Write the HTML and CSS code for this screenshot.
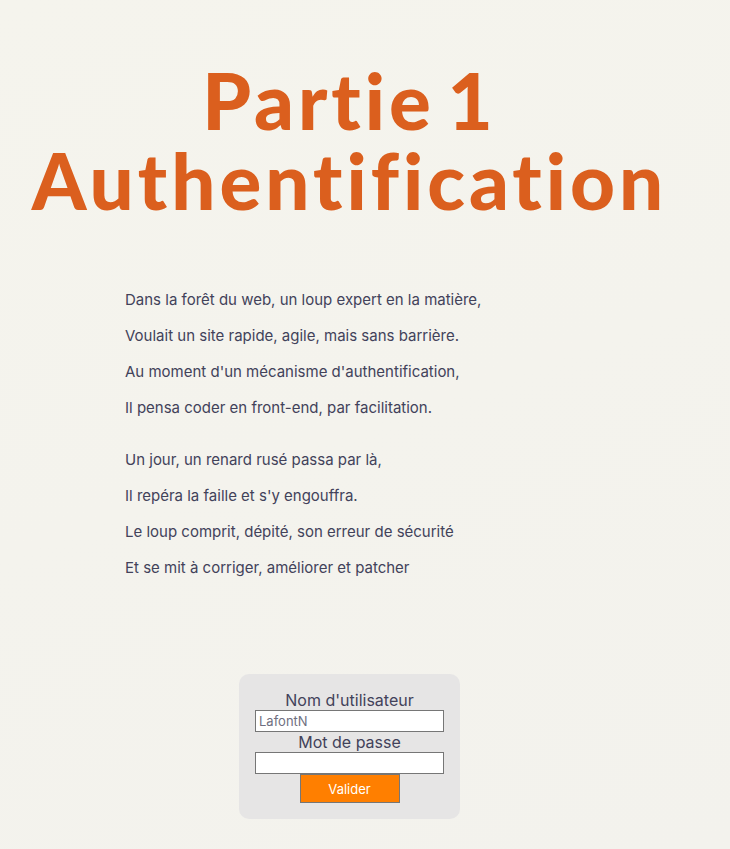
FILE: index.html
```html
<!DOCTYPE html>
<html lang="fr">
<head>
<meta charset="utf-8">
<title>Partie 1 Authentification</title>
<link rel="stylesheet" href="styles.css">
</head>
<body>
<main class="page">
  <h1 class="title">Partie 1<br>Authentification</h1>
  <section class="poem">
    <p>Dans la forêt du web, un loup expert en la matière,<br>
    Voulait un site rapide, agile, mais sans barrière.<br>
    Au moment d'un mécanisme d'authentification,<br>
    Il pensa coder en front-end, par facilitation.</p>
    <p>Un jour, un renard rusé passa par là,<br>
    Il repéra la faille et s'y engouffra.<br>
    Le loup comprit, dépité, son erreur de sécurité<br>
    Et se mit à corriger, améliorer et patcher</p>
  </section>
  <form class="login">
    <label class="label" for="user">Nom d'utilisateur</label>
    <input class="field" id="user" type="text" placeholder="LafontN">
    <label class="label" for="pass">Mot de passe</label>
    <input class="field" id="pass" type="password">
    <button class="submit" type="button">Valider</button>
  </form>
</main>
</body>
</html>
```

FILE: styles.css
```css
html, body {
  margin: 0;
  padding: 0;
}
body {
  background: linear-gradient(160deg, #f5f4ed 0%, #f3f2ed 100%);
  min-height: 849px;
  font-family: "Inter", "Liberation Sans", sans-serif;
  color: #42425a;
}
.page {
  width: 699px;
  display: flex;
  flex-direction: column;
}
.title {
  margin: 60px 0 0;
  text-align: center;
  font-family: "Lato", "Liberation Sans", sans-serif;
  font-weight: 900;
  font-size: 78px;
  line-height: 80px;
  letter-spacing: 4px;
  word-spacing: -10px;
  font-variant-ligatures: none;
  font-feature-settings: "liga" 0, "clig" 0;
  color: #db5f1e;
}
.poem {
  margin: 62px 0 0 125px;
  font-size: 15px;
  line-height: 36px;
}
.poem p {
  margin: 0 0 16px;
}
.login {
  align-self: center;
  margin-top: 72px;
  width: 221px;
  box-sizing: border-box;
  padding: 16px 16px 16px;
  background: #e6e5e5;
  border-radius: 10px;
  display: flex;
  flex-direction: column;
  align-items: center;
}
.label {
  font-size: 16px;
  line-height: 20px;
  color: #42425a;
}
.field {
  width: 189px;
  height: 22px;
  box-sizing: border-box;
  margin: 0;
  border: 1px solid #767676;
  background: #fff;
  font-family: "Inter", "Liberation Sans", sans-serif;
  font-size: 13px;
  padding: 1px 3px;
}
.field::placeholder {
  color: #6f6f80;
}
.submit {
  width: 100px;
  height: 29px;
  margin-top: 0;
  background: #ff7f00;
  border: 1px solid #767676;
  color: #fff;
  font-family: "Inter", "Liberation Sans", sans-serif;
  font-size: 13px;
}
```
